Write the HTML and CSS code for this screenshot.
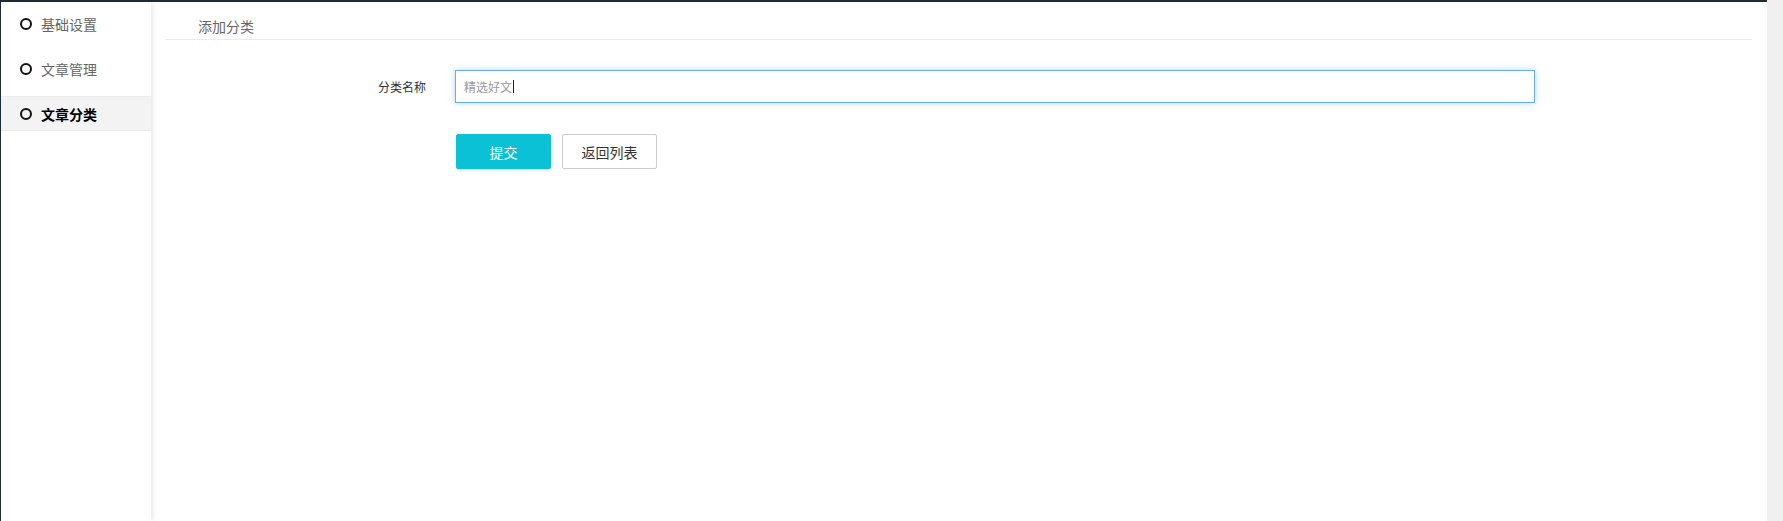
FILE: index.html
```html
<!DOCTYPE html>
<html lang="zh-CN">
<head>
<meta charset="utf-8">
<title>添加分类</title>
<link rel="stylesheet" href="styles.css">
</head>
<body>
<div class="frame">
  <aside class="sidebar">
    <ul class="menu">
      <li class="menu-item"><span class="dot"></span><span class="menu-text">基础设置</span></li>
      <li class="menu-item"><span class="dot"></span><span class="menu-text">文章管理</span></li>
      <li class="menu-item active"><span class="dot"></span><span class="menu-text">文章分类</span></li>
    </ul>
  </aside>
  <main class="main">
    <h2 class="page-title">添加分类</h2>
    <form class="form">
      <div class="form-row">
        <label class="form-label">分类名称</label>
        <div class="form-input"><span class="input-value">精选好文</span><span class="caret"></span></div>
      </div>
      <div class="form-actions">
        <button type="button" class="btn btn-primary">提交</button>
        <button type="button" class="btn btn-default">返回列表</button>
      </div>
    </form>
  </main>
</div>
<div class="scrollbar"></div>
</body>
</html>
```

FILE: styles.css
```css
* { box-sizing: border-box; }
html, body { margin: 0; padding: 0; height: 100%; }
body {
  display: flex;
  background: #1f2b3a;
  font-family: "Noto Sans CJK SC", "Noto Sans", sans-serif;
  overflow: hidden;
}
.frame {
  flex: 1;
  display: flex;
  margin-top: 2px;
  margin-left: 1px;
  background: #fff;
  min-height: 519px;
}
.scrollbar {
  width: 16px;
  flex: none;
  background: #f0f0f0;
}
.sidebar {
  width: 150px;
  flex: none;
  background: #fff;
  box-shadow: 2px 0 5px rgba(0, 0, 0, 0.09);
  position: relative;
  z-index: 1;
}
.menu {
  list-style: none;
  margin: 0;
  padding: 4px 0 0 0;
  display: flex;
  flex-direction: column;
  gap: 10px;
}
.menu-item {
  height: 35px;
  display: flex;
  align-items: center;
  padding-left: 19px;
  gap: 9px;
  font-size: 14px;
  color: #666;
  border-top: 1px solid transparent;
  border-bottom: 1px solid transparent;
}
.dot {
  width: 12px;
  height: 12px;
  border: 2px solid #111;
  border-radius: 50%;
  flex: none;
}
.menu-item.active {
  background: #f3f3f3;
  border-top-color: #ebebeb;
  border-bottom-color: #ebebeb;
  color: #000;
  font-weight: 700;
}
.main {
  flex: 1;
  padding: 0 15px 0 14px;
}
.page-title {
  margin: 0;
  padding: 14px 0 3px 33px;
  font-size: 14px;
  line-height: 20px;
  font-weight: 400;
  color: #666;
  border-bottom: 1px solid #ebebeb;
}
.form {
  padding-top: 30px;
}
.form-row {
  display: flex;
  align-items: center;
}
.form-label {
  width: 261px;
  text-align: right;
  font-size: 12px;
  color: #333;
  margin-right: 29px;
}
.form-input {
  width: 1080px;
  height: 33px;
  border: 1px solid #66afe9;
  box-shadow: 0 0 6px rgba(102, 175, 233, 0.5);
  display: flex;
  align-items: center;
  padding-left: 8px;
  font-size: 12px;
  color: #999;
}
.caret {
  width: 1px;
  height: 13px;
  background: #222;
  margin-left: 1px;
}
.form-actions {
  display: flex;
  gap: 11px;
  margin-top: 31px;
  padding-left: 291px;
}
.btn {
  width: 95px;
  height: 35px;
  font-family: inherit;
  font-size: 14px;
  border-radius: 2px;
  cursor: pointer;
  padding: 0;
}
.btn-primary {
  background: #0bc1d6;
  color: #fff;
  border: 1px solid #0bc1d6;
  box-shadow: 0 1px 3px rgba(170, 110, 220, 0.3);
}
.btn-default {
  background: #fff;
  color: #333;
  border: 1px solid #ccc;
}
```
